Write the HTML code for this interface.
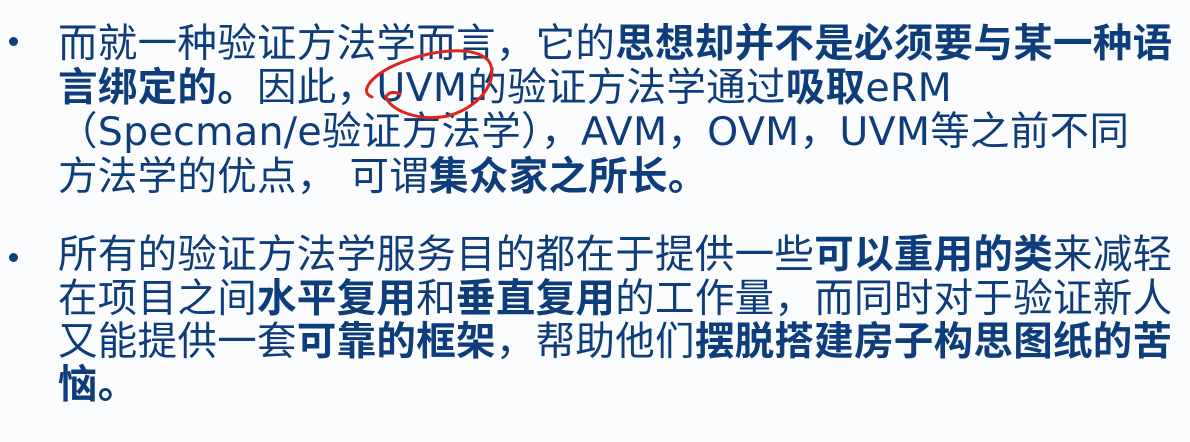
<!DOCTYPE html>
<html><head><meta charset="utf-8"><style>
body{margin:0;width:1190px;height:442px;background:#fbfcfd;overflow:hidden;position:relative}
.l{position:absolute;left:58px;white-space:nowrap;font-family:"DejaVu Sans","Noto Sans CJK SC",sans-serif;font-size:39.5px;line-height:44px;color:#0e3d7c;letter-spacing:0.3px}
b{font-weight:bold}
.d{position:absolute;width:9px;height:9px;border-radius:50%;background:#0e3d7c;left:9px}
</style></head><body>
<div class="d" style="top:37px"></div>
<div class="d" style="top:253px"></div>
<div class="l" style="top:22px">而就一种验证方法学而言，它的<b>思想却并不是必须要与某一种语</b></div>
<div class="l" style="top:66px"><b>言绑定的。</b>因此，UVM的验证方法学通过<b>吸取</b>eRM</div>
<div class="l" style="top:110px">（Specman/e验证方法学），AVM，OVM，UVM等之前不同</div>
<div class="l" style="top:155px">方法学的优点，&nbsp;可谓<b>集众家之所长。</b></div>
<div class="l" style="top:233px">所有的验证方法学服务目的都在于提供一些<b>可以重用的类</b>来减轻</div>
<div class="l" style="top:277px">在项目之间<b>水平复用</b>和<b>垂直复用</b>的工作量，而同时对于验证新人</div>
<div class="l" style="top:320px">又能提供一套<b>可靠的框架</b>，帮助他们<b>摆脱搭建房子构思图纸的苦</b></div>
<div class="l" style="top:363px"><b>恼。</b></div>
<svg style="position:absolute;left:0;top:0" width="1190" height="442"><path d="M372 97 C358 92 372 74 400 63 C432 50 472 45 488 60 C500 76 484 106 448 116 C418 122 390 110 386 97 C389 91 395 92 400 94" fill="none" stroke="#e0241c" stroke-width="3" stroke-linecap="round"/></svg>
</body></html>
